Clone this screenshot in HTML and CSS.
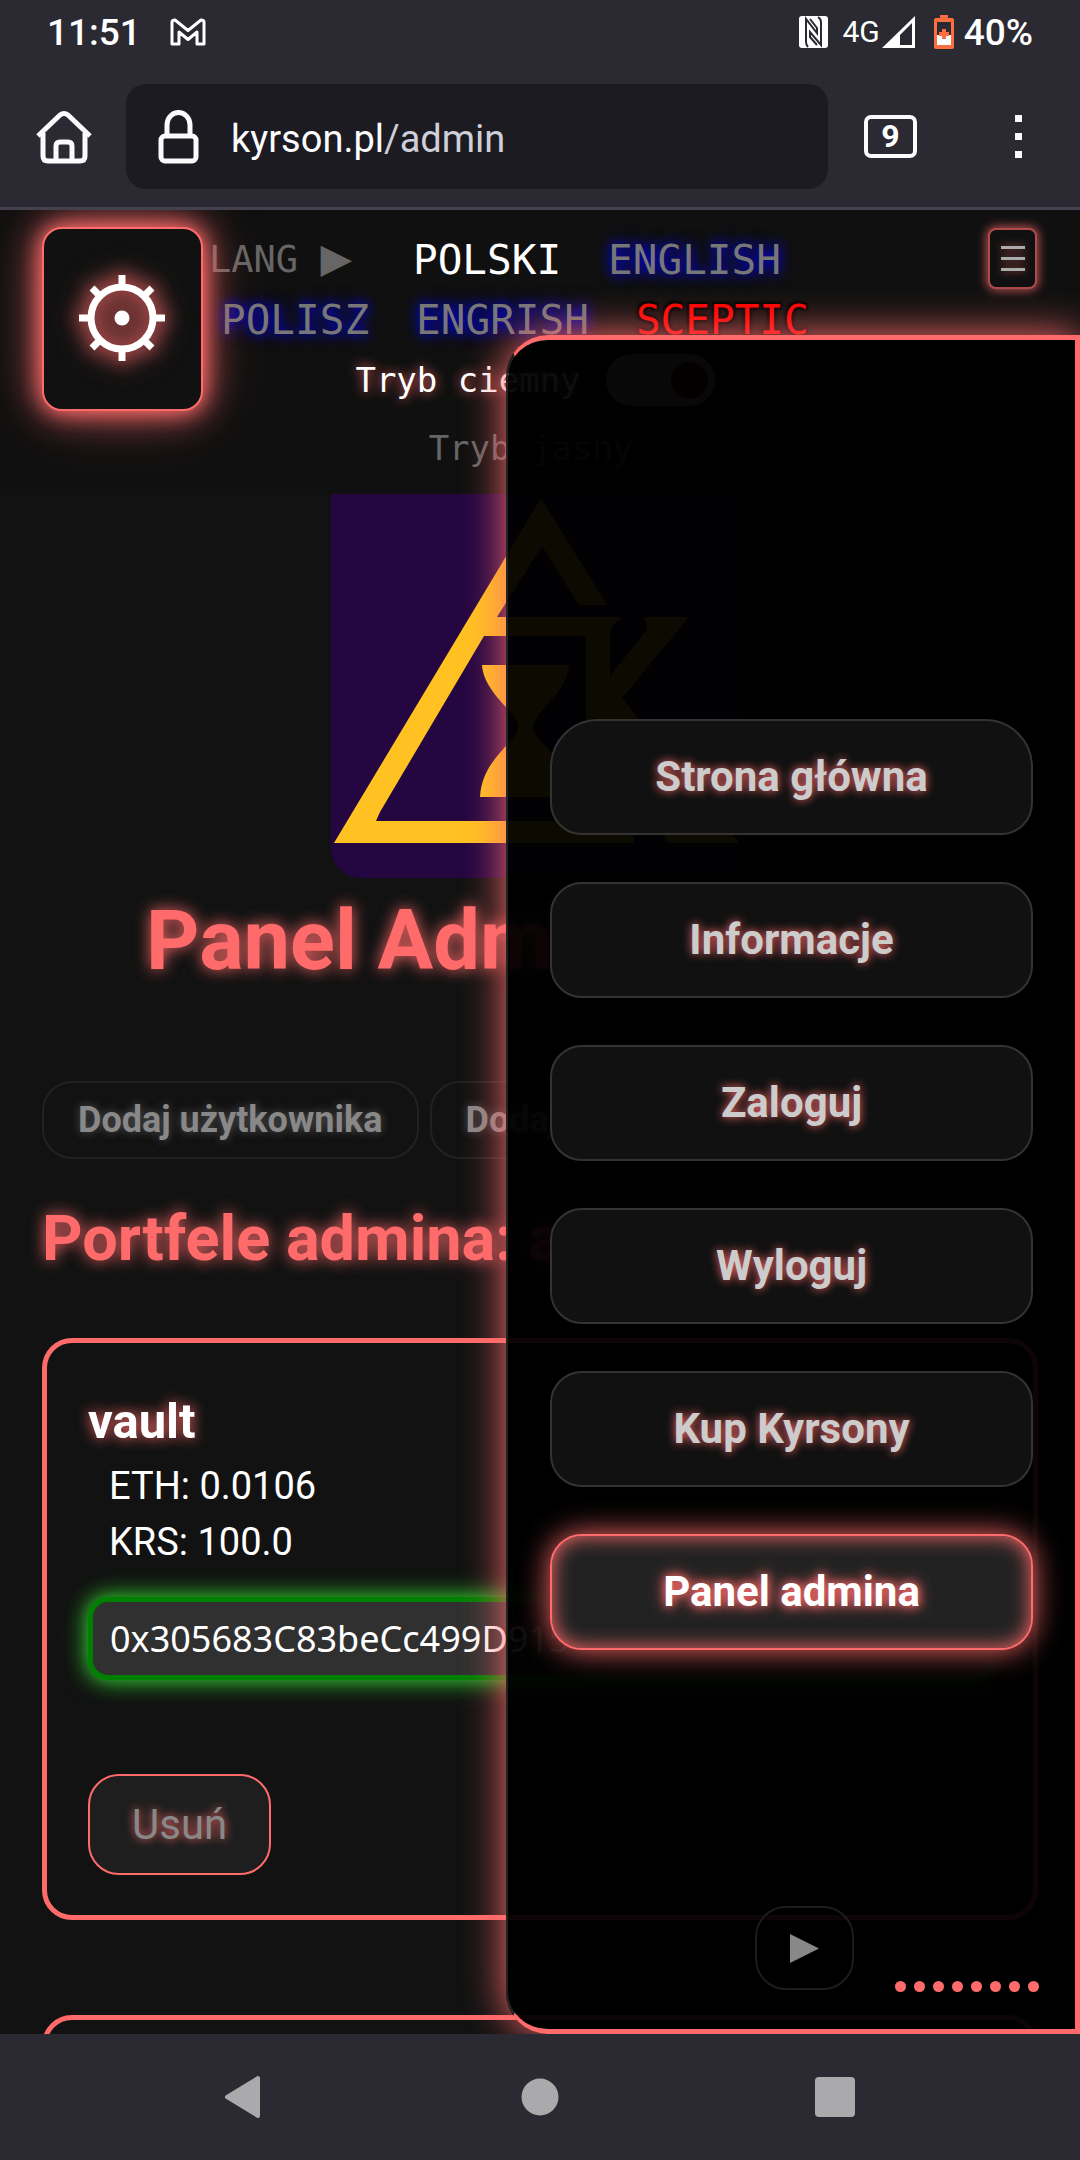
FILE: index.html
```html
<!DOCTYPE html>
<html lang="pl">
<head>
<meta charset="utf-8">
<meta name="viewport" content="width=device-width, initial-scale=1">
<title>Panel Administratora</title>
<link rel="stylesheet" href="styles.css">
</head>
<body>
<div class="screen">
  <div class="statusbar">
    <span class="status-strong">11:51</span>
    <svg class="mail" width="36" height="28" viewBox="0 0 36 28" fill="none" stroke="#fff" stroke-width="3" stroke-linejoin="round"><path d="M2 4Q2 2 5 2L18 12.500 31 2Q34 2 34 4V26H27V14L18 21.500 9 14V26H2Z"/></svg>
    <span class="spacer"></span>
    <svg class="nfc" width="29" height="32" viewBox="0 0 29 32"><rect width="29" height="32" rx="3" fill="#fff"/><path d="M9 31Q7 29 7 26V3L18 17V12L11 3M19 1Q22 3 22 6V29L11 16V21L18 29" fill="none" stroke="#2b2a33" stroke-width="2"/></svg>
    <span class="status-net">4G</span>
    <svg class="signal" width="33" height="32" viewBox="0 0 33 32"><path d="M0 32 33 0V32Z" fill="#fff"/><path d="M18 19 30 7V29H18Z" fill="#2b2a33"/></svg>
    <svg class="battery" width="20" height="34" viewBox="0 0 20 34"><path d="M6 0H14V3H18Q20 3 20 5V32Q20 34 18 34H2Q0 34 0 32V5Q0 3 2 3H6Z" fill="#ff6e40"/><path d="M3 7H17V20H3Z" fill="#2b2a33"/><path d="M3 20H17V30H3Z" fill="#fff"/><path d="M10 14V24M5 19H15" stroke="#ff6e40" stroke-width="4"/></svg>
    <span class="status-strong">40%</span>
  </div>
  <div class="toolbar">
    <button class="tool" aria-label="Home"><svg width="56" height="54" viewBox="0 0 56 54" fill="none" stroke="#fbfbfe" stroke-width="5" stroke-linejoin="round"><path d="M2 26 24 5Q28 2 32 5L54 26"/><path d="M7 23V46Q7 51 12 51H44Q49 51 49 46V23"/><path d="M20 51V36Q20 32 24 32H32Q36 32 36 36V51"/></svg></button>
    <div class="urlbar">
      <svg width="41" height="54" viewBox="0 0 41 54" fill="none" stroke="#fbfbfe" stroke-width="5"><rect x="3" y="26" width="35" height="25" rx="4"/><path d="M9 26V15A11 12 0 0 1 32 15V26"/></svg>
      <span class="url">kyrson.pl<span class="path">/admin</span></span>
    </div>
    <button class="tabs">9</button>
    <button class="more" aria-label="Menu"><span></span><span></span><span></span></button>
  </div>

  <main class="page">
    <header class="top">
      <nav class="langs">
        <div class="lang-row"><span class="lang-label">LANG <span class="arrow">▶</span></span><a class="lang current" href="#">POLSKI</a><a class="lang" href="#">ENGLISH</a></div>
        <div class="lang-row second"><a class="lang" href="#">POLISZ</a><a class="lang" href="#">ENGRISH</a><a class="lang sceptic" href="#">SCEPTIC</a></div>
      </nav>
      <div class="modes">
        <div class="mode on"><label for="dark">Tryb ciemny</label><input id="dark" class="switch" type="checkbox" checked></div>
        <div class="mode">Tryb jasny</div>
      </div>
    </header>

    <svg class="logo" viewBox="0 0 418 384"><rect width="418" height="384" fill="#240641"/>
      <g fill="#ffc222">
        <path fill-rule="evenodd" d="M3 349 210 4 276 111H248L211 52 166 123H291Q281 131 279 138V182L316 136Q316 128 312 123H358L291 204 408 349H337L279 260V303H255V142H153L49 318 45 327H303V349Z"/>
        <path d="M151 171H238C236 200 202 218 202 233 202 248 240 264 241 303H149C151 264 187 248 187 233 187 218 153 200 151 171Z"/>
      </g>
    </svg>
    <h1>Panel Administratora</h1>

    <div class="content">
      <div class="actions">
        <button class="ghost">Dodaj użytkownika</button>
        <button class="ghost">Dodaj portfel</button>
      </div>
      <h2>Portfele admina: admin</h2>
      <section class="card">
        <h3>vault</h3>
        <p>ETH: 0.0106</p>
        <p>KRS: 100.0</p>
        <div class="address">0x305683C83beCc499D915</div>
        <button class="remove">Usuń</button>
      </section>
      <section class="card"></section>
    </div>

    <button class="burger" aria-label="Menu"><span></span><span></span><span></span></button>

    <aside class="drawer">
      <nav class="menu">
        <a href="#">Strona główna</a>
        <a href="#">Informacje</a>
        <a href="#">Zaloguj</a>
        <a href="#">Wyloguj</a>
        <a href="#">Kup Kyrsony</a>
        <a class="active" href="#">Panel admina</a>
      </nav>
      <div class="player">
        <button class="play" aria-label="Play"><svg width="29" height="29" viewBox="0 0 29 29"><path d="M0 0 29 14.500 0 29Z" fill="#888"/></svg></button>
        <div class="dots"><i></i><i></i><i></i><i></i><i></i><i></i><i></i><i></i></div>
      </div>
    </aside>

    <button class="gear" aria-label="Ustawienia">
      <svg width="86" height="86" viewBox="-43 -43 86 86" fill="none" stroke="#fff" stroke-width="7"><circle r="31"/><circle r="7.500" fill="#fff" stroke="none"/><path d="M0-34V-43M0 34V43M-34 0H-43M34 0H43M24 24 30 30M-24-24-30-30M24-24 30-30M-24 24-30 30"/></svg>
    </button>
  </main>

  <div class="sysnav">
    <button aria-label="Back"><svg width="40" height="44" viewBox="0 0 40 44"><path d="M2 22 33 3V41Z" fill="#aaaaac" stroke="#aaaaac" stroke-width="4" stroke-linejoin="round"/></svg></button>
    <button aria-label="Home"><svg width="40" height="44" viewBox="0 0 40 44"><circle cx="20" cy="22" r="18.500" fill="#aaaaac"/></svg></button>
    <button aria-label="Recents"><svg width="40" height="44" viewBox="0 0 40 44"><rect y="2" width="40" height="40" rx="4" fill="#aaaaac"/></svg></button>
  </div>
</div>
</body>
</html>
```

FILE: styles.css
```css
:root {
  --accent: #ff6b6b;
  --chrome: #2b2a33;
  --mono: "DejaVu Sans Mono", monospace;
}

* { box-sizing: border-box; }

body {
  margin: 0;
  background: #121212;
  color: #fff;
  font-family: Roboto, sans-serif;
}

button {
  margin: 0;
  padding: 0;
  border: 0;
  background: none;
  color: inherit;
  font: inherit;
}

a { color: inherit; text-decoration: none; }
svg { display: block; }
h1, h2, h3, p { margin: 0; }

.screen {
  display: flex;
  flex-direction: column;
  height: 100vh;
}

/* status bar */
.statusbar {
  display: flex;
  align-items: center;
  height: 64px;
  padding: 0 47px;
  background: var(--chrome);
}
.status-strong { font-size: 37px; font-weight: 500; line-height: 64px; padding-top: 2px; }
.status-net { font-size: 30px; line-height: 60px; margin: 0 2px 0 14px; }
.mail { margin-left: 29px; }
.spacer { flex: 1; }
.battery { margin: 0 10px 0 19px; }

/* browser toolbar */
.toolbar {
  display: flex;
  align-items: center;
  height: 146px;
  padding: 2px 58px 0 36px;
  background: var(--chrome);
  border-bottom: 3px solid #42414d;
}
.urlbar {
  flex: 1;
  display: flex;
  align-items: center;
  gap: 32px;
  height: 105px;
  margin: 0 36px 0 34px;
  padding-left: 32px;
  border-radius: 20px;
  background: #1c1b22;
}
.url { padding-top: 4px; font-size: 38px; color: #fbfbfe; }
.path { color: #cfcfd8; }
.tabs {
  width: 53px;
  height: 43px;
  border: 4px solid #fbfbfe;
  border-radius: 7px;
  font-size: 32px;
  font-weight: 700;
  line-height: 35px;
}
.more {
  display: flex;
  flex-direction: column;
  gap: 11px;
  margin-left: 98px;
}
.more span { width: 7px; height: 7px; background: #fbfbfe; }

/* page */
.page {
  position: relative;
  flex: 1;
  min-height: 0;
  overflow: hidden;
}
.top {
  padding: 20px 0 17px;
  background: #101010;
  font-family: var(--mono);
}
.langs { padding-left: 209px; line-height: 60px; font-size: 41px; }
.lang-row { display: flex; gap: 47px; height: 60px; }
.second { padding-left: 12px; }
.lang-label { width: 157px; font-size: 37px; color: #666; white-space: nowrap; }
.arrow { font-family: "DejaVu Sans", sans-serif; font-size: 41px; line-height: 37px; }
.lang { color: #777; text-shadow: 0 0 12px #00f, 0 0 20px #00f6; }
.current { color: #fff; text-shadow: none; }
.sceptic {
  color: #f00;
  text-shadow: -2px -2px 2px #000, 2px -2px 2px #000, -2px 2px 2px #000, 2px 2px 2px #000, 0 0 4px #000;
}
.modes {
  display: flex;
  flex-direction: column;
  align-items: center;
  gap: 8px;
  padding-right: 10px;
  font-size: 34px;
  line-height: 60px;
}
.mode { display: flex; align-items: center; gap: 25px; height: 60px; padding-right: 8px; color: #666; }
.on { padding: 0; color: #fff; text-shadow: 0 0 12px var(--accent); }
.switch {
  appearance: none;
  display: flex;
  justify-content: flex-end;
  align-items: center;
  width: 109px;
  height: 52px;
  margin: 0;
  padding: 7px;
  border-radius: 26px;
  background: #999;
}
.switch::before { content: ""; width: 37px; height: 37px; border-radius: 50%; background: #600; }

.logo {
  width: 418px;
  height: 384px;
  margin: -1px auto 0;
  border-radius: 0 0 30px 30px;
}
h1, h2 { color: var(--accent); text-shadow: 0 0 16px var(--accent); font-weight: 700; }
h1 { margin: 14px 0 91px; font-size: 83px; line-height: 98px; text-align: center; }
h2 { margin: 43px 0 63px; font-size: 63px; line-height: 73px; }
.content { padding: 0 42px; }
.actions { display: flex; gap: 11px; }
.ghost {
  height: 78px;
  padding: 0 34px;
  border: 2px solid #222;
  border-radius: 30px;
  color: #888;
  font-size: 36px;
  font-weight: 700;
  text-shadow: 0 0 10px #555;
}
.card {
  min-height: 200px;
  margin-bottom: 95px;
  padding: 49px 41px 40px;
  border: 5px solid var(--accent);
  border-radius: 30px;
}
h3 { margin-bottom: 6px; font-size: 49px; line-height: 60px; text-shadow: 0 0 14px var(--accent); }
.card p { padding-left: 21px; font-size: 38px; line-height: 56px; }
.address {
  height: 83px;
  margin: 27px 0 94px;
  padding: 0 17px;
  overflow: hidden;
  border: 5px solid #008000;
  border-radius: 20px;
  background: #303030;
  box-shadow: 0 0 20px #32cd32, 0 0 30px #32cd3266;
  font: 36px/73px "Noto Sans", sans-serif;
}
.remove {
  height: 101px;
  padding: 0 42px;
  border: 2px solid var(--accent);
  border-radius: 31px;
  background: #1e1e1e;
  color: #888;
  font-size: 42px;
  text-shadow: 0 0 10px var(--accent);
}

/* floating controls and side drawer */
.burger {
  position: absolute;
  top: 18px;
  right: 43px;
  display: flex;
  flex-direction: column;
  align-items: center;
  justify-content: center;
  gap: 8px;
  width: 49px;
  height: 61px;
  border: 2px solid var(--accent);
  border-radius: 8px;
  background: #111;
  box-shadow: 0 0 10px 2px var(--accent);
  opacity: .65;
}
.burger span { width: 24px; height: 3px; background: #fff; box-shadow: 0 0 8px var(--accent); }

.drawer {
  position: absolute;
  top: 125px;
  right: 0;
  bottom: 0;
  display: flex;
  flex-direction: column;
  justify-content: space-between;
  width: 574px;
  max-width: 100%;
  padding: 379px 42px 37px;
  border: 5px solid var(--accent);
  border-left: 2px solid #222;
  border-radius: 42px 0 0 42px;
  background: rgba(0, 0, 0, .95);
  background-clip: padding-box;
  box-shadow: 0 0 42px var(--accent);
}
.menu { display: flex; flex-direction: column; gap: 47px; }
.menu a {
  height: 116px;
  border: 2px solid #333;
  border-radius: 32px;
  background: #111;
  color: #ccc;
  font-size: 42px;
  font-weight: 700;
  line-height: 112px;
  text-align: center;
  text-shadow: 0 0 10px var(--accent);
}
.menu a:first-child { border-radius: 48px 48px 32px 32px; }
.menu .active {
  border-color: var(--accent);
  background: #222;
  color: #fff;
  box-shadow: 0 0 30px var(--accent), inset 0 0 20px var(--accent);
  text-shadow: 0 0 10px var(--accent), 0 0 16px var(--accent);
}
.player { display: flex; justify-content: flex-end; align-items: flex-end; gap: 41px; }
.play {
  display: grid;
  place-items: center;
  width: 99px;
  height: 84px;
  margin-bottom: 2px;
  border: 2px solid #1c1c1c;
  border-radius: 31px;
}
.dots { display: flex; gap: 8px; margin-right: -6px; }
.dots i { width: 11px; height: 11px; border-radius: 50%; background: var(--accent); }

.gear {
  position: absolute;
  top: 17px;
  left: 42px;
  display: grid;
  place-items: center;
  width: 161px;
  height: 184px;
  padding: 0 2px 2px 0;
  border: 2px solid var(--accent);
  border-radius: 20px;
  background: #111;
  box-shadow: 0 0 20px var(--accent), 0 0 40px var(--accent), 0 0 80px #ff6b6b33;
}
.gear svg { overflow: visible; filter: drop-shadow(0 0 10px var(--accent)) drop-shadow(0 0 12px #ff6b6b88); }

/* system navigation */
.sysnav {
  display: flex;
  justify-content: center;
  align-items: center;
  gap: 255px;
  height: 126px;
  background: var(--chrome);
}
```
